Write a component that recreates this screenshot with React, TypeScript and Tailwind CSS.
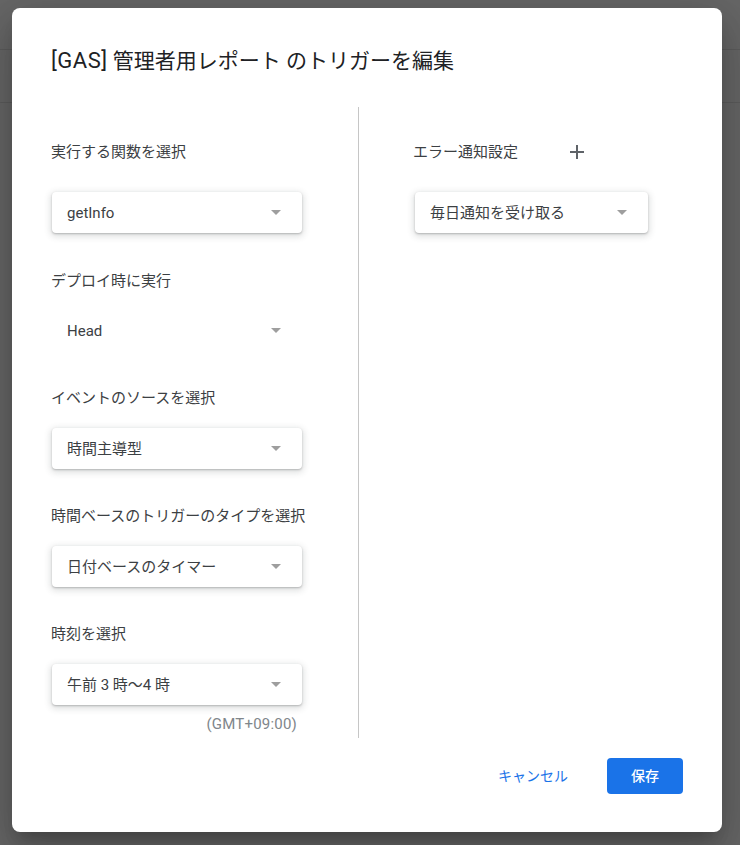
import React from "react";

const FONT = { fontFamily: '"Roboto", "Noto Sans CJK JP", sans-serif' };

function Arrow() {
  return (
    <svg width="10" height="5" viewBox="0 0 10 5" className="shrink-0">
      <path d="M0 0 L10 0 L5 5 Z" fill="#9e9e9e" />
    </svg>
  );
}

function SelectBox({ text, width, flat }: { text: string; width: string; flat?: boolean }) {
  return (
    <div
      className={
        "flex h-[41px] items-center justify-between rounded-[4px] bg-white pl-[15px] pr-[21px] " +
        width +
        (flat ? "" : " shadow-[0_1px_2px_0_rgba(60,64,67,0.3),0_2px_6px_2px_rgba(60,64,67,0.15)]")
      }
    >
      <span className="text-[15px] leading-[20px] text-[#3c4043]">{text}</span>
      <Arrow />
    </div>
  );
}

function Label({ text, className = "" }: { text: string; className?: string }) {
  return <div className={"h-[20px] text-[15px] leading-[20px] text-[#3c4043] " + className}>{text}</div>;
}

export default function App() {
  return (
    <div className="relative h-[845px] w-[740px] overflow-hidden bg-[#666666]" style={FONT}>
      <div className="h-[50px] border-b border-[#5c5c5c]" />
      <div className="h-[53px] border-b border-[#5c5c5c]" />

      <div className="absolute left-[12px] top-[8px] flex h-[824px] w-[710px] flex-col rounded-[8px] bg-white px-[39px] shadow-[0_24px_38px_3px_rgba(0,0,0,0.14),0_9px_46px_8px_rgba(0,0,0,0.12),0_11px_15px_-7px_rgba(0,0,0,0.2)]">
        <div className="mt-[39px] h-[28px] whitespace-nowrap text-[21px] leading-[28px] text-[#202124]">
          <span className="text-[22px] tracking-[0.5px]">[GAS]</span> 管理者用レポート のトリガーを編集
        </div>

        <div className="mt-[32px] flex h-[631px]">
          <div className="flex w-[308px] flex-col border-r border-[#c6c6c6] pt-[35px]">
            <Label text="実行する関数を選択" />
            <div className="ml-[1px] mt-[30px]">
              <SelectBox text="getInfo" width="w-[250px]" />
            </div>
            <Label text="デプロイ時に実行" className="mt-[38px]" />
            <div className="ml-[1px] mt-[19px]">
              <SelectBox text="Head" width="w-[250px]" flat />
            </div>
            <Label text="イベントのソースを選択" className="mt-[37px]" />
            <div className="ml-[1px] mt-[20px]">
              <SelectBox text="時間主導型" width="w-[250px]" />
            </div>
            <Label text="時間ベースのトリガーのタイプを選択" className="mt-[37px]" />
            <div className="ml-[1px] mt-[20px]">
              <SelectBox text="日付ベースのタイマー" width="w-[250px]" />
            </div>
            <Label text="時刻を選択" className="mt-[37px]" />
            <div className="ml-[1px] mt-[20px]">
              <SelectBox text="午前 3 時〜4 時" width="w-[250px]" />
            </div>
            <div className="ml-[1px] mt-[11px] w-[250px] pr-[5px] text-right text-[15px] leading-[16px] tracking-[0.2px] text-[#80868b]">
              (GMT+09:00)
            </div>
          </div>

          <div className="flex flex-col pl-[54px] pt-[35px]">
            <div className="flex h-[20px] items-center">
              <span className="text-[15px] leading-[20px] text-[#3c4043]">エラー通知設定</span>
              <svg width="16" height="16" viewBox="0 0 16 16" className="ml-[51px]">
                <path d="M8 1 V15 M1 8 H15" stroke="#5f6368" strokeWidth="2" />
              </svg>
            </div>
            <div className="ml-[2px] mt-[30px]">
              <SelectBox text="毎日通知を受け取る" width="w-[233px]" />
            </div>
          </div>
        </div>

        <div className="mt-[20px] flex items-center justify-end gap-[15px]">
          <button className="h-[36px] rounded-[4px] px-[24px] text-[14px] text-[#1a73e8]">キャンセル</button>
          <button className="h-[36px] w-[76px] rounded-[4px] bg-[#1a73e8] text-[14px] font-medium text-white">保存</button>
        </div>
      </div>
    </div>
  );
}
